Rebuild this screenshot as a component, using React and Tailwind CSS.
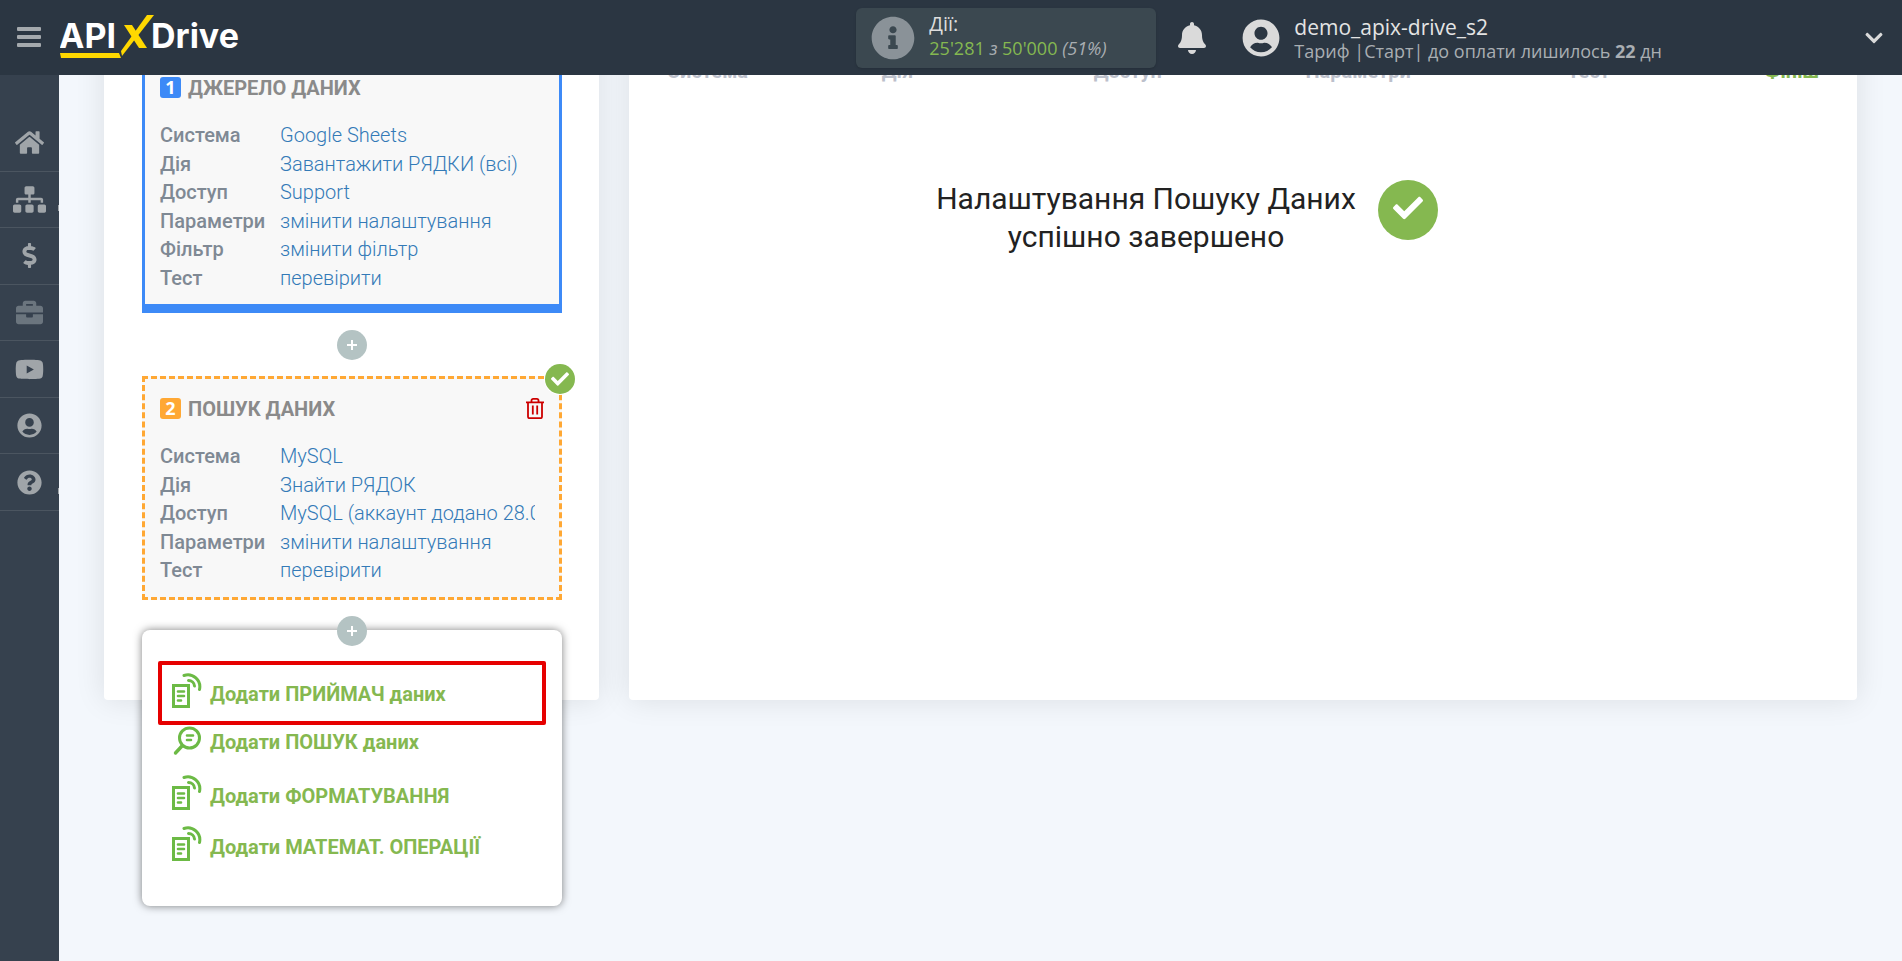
import {
  FaBell,
  FaBriefcase,
  FaCheck,
  FaChevronDown,
  FaDollarSign,
  FaHome,
  FaInfoCircle,
  FaQuestionCircle,
  FaSitemap,
  FaUserCircle,
  FaYoutube,
} from "react-icons/fa";

const navItems = [
  { label: "Головна", icon: FaHome, size: "size-[29px]" },
  { label: "Зв'язки", icon: FaSitemap, size: "size-[33px]", submenu: true },
  { label: "Оплата", icon: FaDollarSign, size: "size-[25px]" },
  { label: "Проекти", icon: FaBriefcase, size: "size-[27px]", dim: true },
  { label: "Відео", icon: FaYoutube, size: "size-[29px]" },
  { label: "Профіль", icon: FaUserCircle, size: "size-[25px]" },
  { label: "Допомога", icon: FaQuestionCircle, size: "size-[25px]", submenu: true },
];

const sourceRows = [
  ["Система", "Google Sheets"],
  ["Дія", "Завантажити РЯДКИ (всі)"],
  ["Доступ", "Support"],
  ["Параметри", "змінити налаштування"],
  ["Фільтр", "змінити фільтр"],
  ["Тест", "перевірити"],
];

const searchRows = [
  ["Система", "MySQL"],
  ["Дія", "Знайти РЯДОК"],
  ["Доступ", "MySQL (аккаунт додано 28.0"],
  ["Параметри", "змінити налаштування"],
  ["Тест", "перевірити"],
];

const steps = ["Система", "Дія", "Доступ", "Параметри", "Тест", "Фініш"];

const menuItems = [
  { label: "Додати ПРИЙМАЧ даних", highlighted: true },
  { label: "Додати ПОШУК даних", search: true },
  { label: "Додати ФОРМАТУВАННЯ" },
  { label: "Додати МАТЕМАТ. ОПЕРАЦІЇ" },
];

function Logo() {
  return (
    <svg width="184" height="45" viewBox="0 0 184 45" role="img" aria-label="APIXDrive">
      <g fill="#fff" fontFamily="Inter, sans-serif" fontWeight="700" fontSize="34">
        <text x="-1" y="33">API</text>
        <text x="91" y="33">Drive</text>
      </g>
      <g fill="#ffd800">
        <path d="M64 10h8l15 23h-8z" />
        <path d="M87 0h7L62 41l-1-5z" />
        <path d="M0 38h59l2 5H1z" />
      </g>
    </svg>
  );
}

function DocumentIcon() {
  return (
    <svg width="30" height="36" viewBox="0 0 30 36" fill="none" stroke="#6cba45" aria-hidden="true">
      <path d="M1.5 13.5h15v21h-15z" strokeWidth="3" />
      <path d="M6 19.5h6M6 24h6M6 28.5h3" strokeWidth="2.6" strokeLinecap="round" />
      <path d="M12 3.5A12 12 0 0 1 27.500 17.500" strokeWidth="3" strokeLinecap="round" />
      <path d="M16.500 8.500A6 6 0 0 1 22.500 14" strokeWidth="3" strokeLinecap="round" />
    </svg>
  );
}

function SearchIcon() {
  return (
    <svg width="30" height="30" viewBox="0 0 30 30" fill="none" stroke="#6cba45" strokeLinecap="round" aria-hidden="true">
      <circle cx="17.5" cy="12" r="10" strokeWidth="3" />
      <path d="M10 20l-6.500 7" strokeWidth="3.4" />
      <path d="M15 9.500h6M15 14h4" strokeWidth="2.6" />
    </svg>
  );
}

function TrashIcon() {
  return (
    <svg width="18" height="21" viewBox="0 0 18 21" fill="none" stroke="#cc0000" strokeWidth="1.8" aria-hidden="true">
      <path d="M0 4.300h18M5.500 4V2.500c0-1 .7-1.600 1.600-1.600h3.800c.9 0 1.600.6 1.600 1.600V4" />
      <path d="M2 4.500v14.200c0 .9.600 1.500 1.500 1.500h11c.9 0 1.500-.6 1.500-1.500V4.500" />
      <path d="M6.800 7.500v9M11.200 7.500v9" />
    </svg>
  );
}

function AddButton() {
  return (
    <button
      type="button"
      aria-label="Додати"
      className="relative z-10 mx-auto flex size-[30px] items-center justify-center rounded-full bg-[#b4c3c3] text-white"
    >
      <svg width="10" height="10" viewBox="0 0 10 10" stroke="currentColor" strokeWidth="2" aria-hidden="true">
        <path d="M5 0v10M0 5h10" />
      </svg>
    </button>
  );
}

function BlockContent({ number, badge, title, rows, action }) {
  return (
    <>
      <div className="flex h-7 items-center">
        <span className={"flex size-[21px] items-center justify-center rounded-[3px] text-lg font-bold text-white font-['Open_Sans',sans-serif] " + badge}>
          {number}
        </span>
        <h2 className="ml-[7px] flex-1 pt-0.5 text-xl font-bold text-[#8a8a8a]">{title}</h2>
        {action}
      </div>
      <dl className={"mt-5 grid auto-rows-fr grid-cols-1 pr-[9px] text-xl leading-7 " + (rows.length === 6 ? "min-h-[171px]" : "min-h-[143px]")}>
        {rows.map(([label, value]) => (
          <div key={label} className="flex items-start">
            <dt className="w-[120px] shrink-0 font-medium text-[#7f8994]">{label}</dt>
            <dd className="min-w-0 overflow-hidden whitespace-nowrap">
              <a href="#" className="font-light text-[#337ab7]">{value}</a>
            </dd>
          </div>
        ))}
      </dl>
    </>
  );
}

function Header() {
  return (
    <header className="sticky top-0 z-20 flex h-[75px] items-center bg-[#2b3642] font-['Open_Sans',sans-serif]">
      <button type="button" aria-label="Меню" className="ml-[17px] flex w-6 flex-col gap-1 pb-0.5">
        <span className="h-1 rounded-[1px] bg-[#a4a9ad]" />
        <span className="h-1 rounded-[1px] bg-[#a4a9ad]" />
        <span className="h-1 rounded-[1px] bg-[#a4a9ad]" />
      </button>
      <a href="#" className="ml-[19px]">
        <Logo />
      </a>

      <div className="ml-auto flex h-[60px] w-[300px] items-center rounded-md bg-[#3b4850] pl-[15px] shadow-sm">
        <FaInfoCircle className="size-[44px] text-[#8a9298]" />
        <div className="ml-[14px] pb-1">
          <p className="text-xl leading-6 text-[#dddddd]">Дії:</p>
          <p className="text-lg leading-6 text-[#85b850]">
            25'281 <i className="text-[#a9aeb2]">з</i> 50'000 <i className="text-[#a9aeb2]">(51%)</i>
          </p>
        </div>
      </div>

      <button type="button" aria-label="Сповіщення" className="ml-5 text-[#dadada]">
        <FaBell className="size-8" />
      </button>

      <div className="ml-[34px] flex items-center">
        <FaUserCircle className="size-[38px] text-[#dadada]" />
        <div className="ml-[14px] pt-0.5">
          <p className="text-[21px] leading-6 text-[#e4e4e4]">demo_apix-drive_s2</p>
          <p className="text-lg leading-6 text-[#a9aeb2]">
            Тариф |Старт| до оплати лишилось <b>22</b> дн
          </p>
        </div>
      </div>

      <button type="button" aria-label="Розгорнути" className="mr-[18px] ml-[202px] text-[#dadada]">
        <FaChevronDown className="size-5" />
      </button>
    </header>
  );
}

function Sidebar() {
  return (
    <nav className="z-10 w-[59px] shrink-0 bg-[#36414e] pt-10">
      <ul className="grid min-h-[396px] auto-rows-fr">
        {navItems.map((item) => {
          const Icon = item.icon;
          return (
            <li key={item.label} className="flex border-b border-[#4b5560]">
              <a
                href="#"
                aria-label={item.label}
                className={"relative flex flex-1 items-center justify-center " + (item.dim ? "text-[#6b757e]" : "text-[#a0a5a9]")}
              >
                <Icon className={item.size} />
                {item.submenu && <span className="absolute right-0 bottom-4 h-1.5 w-px bg-current" />}
              </a>
            </li>
          );
        })}
      </ul>
    </nav>
  );
}

function AddMenu() {
  return (
    <div className="absolute inset-x-0 top-[14px] rounded-lg bg-white px-[30px] pt-[42px] pb-[45px] shadow-[0_0_8px_rgba(0,0,0,0.5)]">
      <ul className="flex flex-col gap-[15px]">
        {menuItems.map((item) => (
          <li key={item.label} className={item.search ? "my-[3px]" : "relative"}>
            <a href="#" className="flex items-end gap-2 text-xl leading-7 font-bold text-[#85b850]">
              {item.search ? <SearchIcon /> : <DocumentIcon />}
              {item.label}
            </a>
            {item.highlighted && (
              <span className="pointer-events-none absolute -inset-x-[14px] -top-[11px] -bottom-[17px] rounded-[2px] border-4 border-[#e60000]" />
            )}
          </li>
        ))}
      </ul>
    </div>
  );
}

export default function App() {
  return (
    <div className="flex min-h-screen flex-col bg-[#f3f7fc] font-[Roboto,sans-serif]">
      <Header />
      <div className="flex flex-1">
        <Sidebar />
        <main className="-mt-[50px] flex flex-1 items-start px-[45px]">
          <div className="flex flex-1 items-stretch gap-[30px]">
            <section className="w-[495px] shrink-0 rounded bg-white pt-[30px] pr-[37px] pb-[54px] pl-[38px] shadow-[0_0_30px_rgba(0,0,0,0.1)]">
              <div className="border-3 border-b-9 border-[#3d8af7] bg-[#f8f8f8] px-[15px] pt-[15px] pb-3">
                <BlockContent number="1" badge="bg-[#3d8af7]" title="ДЖЕРЕЛО ДАНИХ" rows={sourceRows} />
              </div>

              <div className="pt-[17px] pb-4">
                <AddButton />
              </div>

              <div className="relative border-3 border-dashed border-[#ffa834] bg-[#f8f8f8] px-[15px] pt-[15px] pb-3">
                <span className="absolute -top-[15px] -right-[16px] flex size-[30px] items-center justify-center rounded-full bg-[#85b850] text-white ring-1 ring-white">
                  <FaCheck className="size-[18px]" />
                </span>
                <BlockContent
                  number="2"
                  badge="bg-[#ffa834]"
                  title="ПОШУК ДАНИХ"
                  rows={searchRows}
                  action={
                    <button type="button" aria-label="Видалити">
                      <TrashIcon />
                    </button>
                  }
                />
              </div>

              <div className="relative mt-4">
                <AddButton />
                <AddMenu />
              </div>
            </section>

            <section className="min-w-0 flex-1 rounded bg-white px-[38px] pt-8 shadow-[0_0_30px_rgba(0,0,0,0.1)]">
              <ol className="grid grid-cols-10 text-center text-xl leading-7 font-bold text-[#bcc0cb]">
                {steps.map((step, i) => (
                  <li
                    key={step}
                    className={i === 0 ? "text-left" : i === steps.length - 1 ? "text-right text-[#85b850]" : "col-span-2"}
                  >
                    {step}
                  </li>
                ))}
              </ol>

              <div className="mt-[95px] flex justify-center gap-[22px] pr-[112px]">
                <h1 className="text-center text-3xl leading-[38px] text-[#222222]">
                  Налаштування Пошуку Даних
                  <br />
                  успішно завершено
                </h1>
                <span className="flex size-[60px] items-center justify-center rounded-full bg-[#85b850] pb-1 text-white">
                  <FaCheck className="size-[30px]" />
                </span>
              </div>
            </section>
          </div>
        </main>
      </div>
    </div>
  );
}
